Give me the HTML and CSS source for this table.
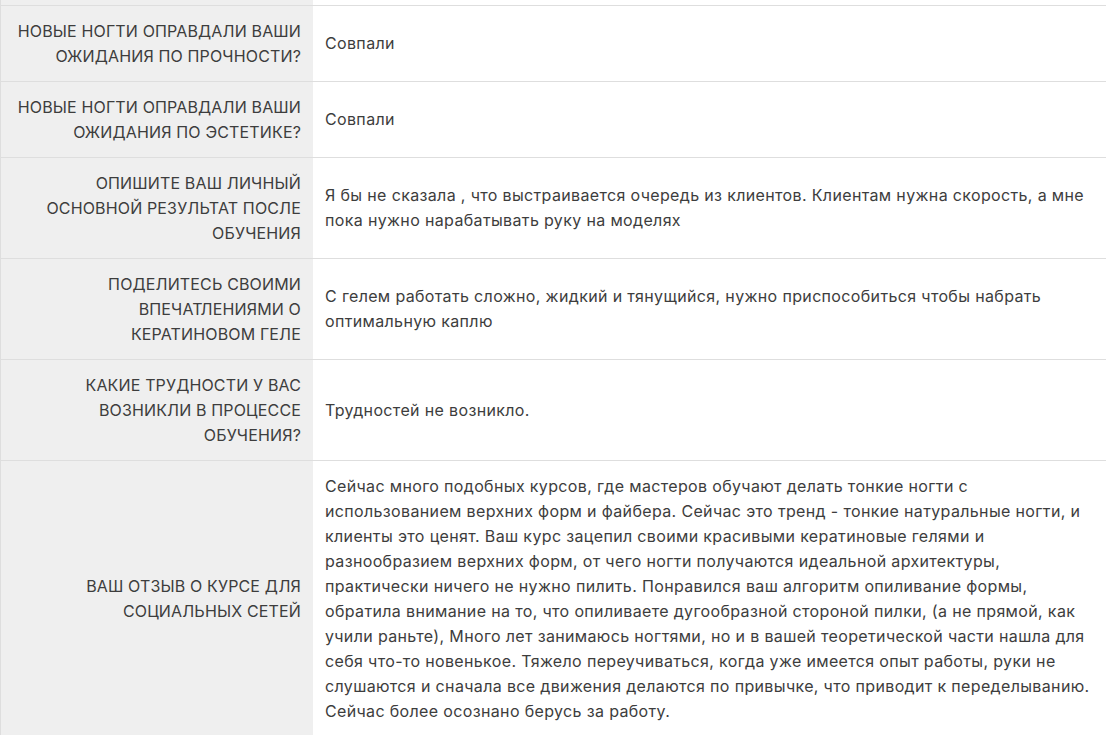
FILE: index.html
```html
<!DOCTYPE html>
<html lang="ru">
<head>
    <meta charset="UTF-8">
    <meta name="viewport" content="width=device-width, initial-scale=1.0">
    <title>Анкета ученика</title>
    <link rel="stylesheet" href="styles.css">
</head>
<body>
    <table class="answers">
        <tr class="cut">
            <th></th>
            <td></td>
        </tr>
        <tr>
            <th>Новые ногти оправдали ваши ожидания по прочности?</th>
            <td>Совпали</td>
        </tr>
        <tr>
            <th>Новые ногти оправдали ваши ожидания по эстетике?</th>
            <td>Совпали</td>
        </tr>
        <tr>
            <th>Опишите ваш личный основной результат после обучения</th>
            <td>Я бы не сказала , что выстраивается очередь из клиентов. Клиентам нужна скорость, а мне пока нужно нарабатывать руку на моделях</td>
        </tr>
        <tr>
            <th>Поделитесь своими впечатлениями о кератиновом геле</th>
            <td>С гелем работать сложно, жидкий и тянущийся, нужно приспособиться чтобы набрать оптимальную каплю</td>
        </tr>
        <tr>
            <th>Какие трудности у вас возникли в процессе обучения?</th>
            <td>Трудностей не возникло.</td>
        </tr>
        <tr>
            <th>Ваш отзыв о курсе для социальных сетей</th>
            <td>Сейчас много подобных курсов, где мастеров обучают делать тонкие ногти с использованием верхних форм и файбера. Сейчас это тренд - тонкие натуральные ногти, и клиенты это ценят. Ваш курс зацепил своими красивыми кератиновые гелями и разнообразием верхних форм, от чего ногти получаются идеальной архитектуры, практически ничего не нужно пилить. Понравился ваш алгоритм опиливание формы, обратила внимание на то, что опиливаете дугообразной стороной пилки, (а не прямой, как учили раньте), Много лет занимаюсь ногтями, но и в вашей теоретической части нашла для себя что-то новенькое. Тяжело переучиваться, когда уже имеется опыт работы, руки не слушаются и сначала все движения делаются по привычке, что приводит к переделыванию. Сейчас более осознано берусь за работу.</td>
        </tr>
    </table>
</body>
</html>
```

FILE: styles.css
```css
body {
    margin: 0;
    background: #fff;
    font-family: Inter, "Noto Sans", sans-serif;
    color: #3d3d3d;
}

.answers {
    width: 1106px;
    border-collapse: collapse;
    border-left: 1px solid #dedede;
    font-size: 16px;
    line-height: 25px;
}

.answers tr {
    border-bottom: 1px solid #dedede;
}

.answers th {
    width: 288px;
    padding: 12.5px 12px;
    background: #efefef;
    text-align: right;
    text-transform: uppercase;
    font-weight: normal;
    letter-spacing: 0.15px;
    vertical-align: middle;
}

.answers td {
    padding: 12.5px 12px;
    text-align: left;
    vertical-align: middle;
    letter-spacing: 0.35px;
}

.answers .cut th,
.answers .cut td {
    height: 5px;
    padding: 0;
}
```
